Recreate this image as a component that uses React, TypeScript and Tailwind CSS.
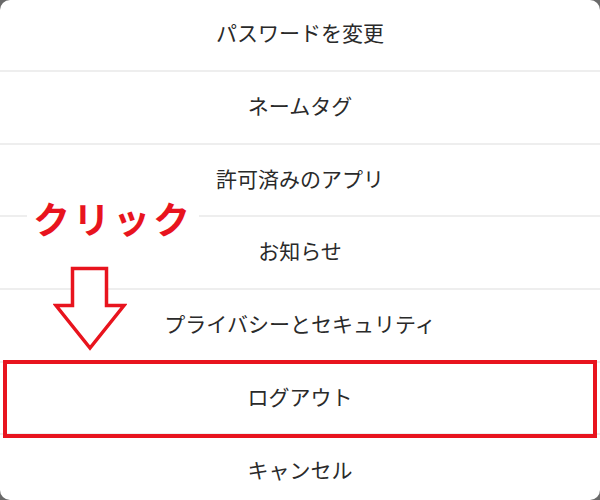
const items = [
    "パスワードを変更",
    "ネームタグ",
    "許可済みのアプリ",
    "お知らせ",
    "プライバシーとセキュリティ",
    "ログアウト",
    "キャンセル",
];

function DownArrow() {
    return (
        <svg width="74" height="86" viewBox="0 0 74 86" fill="none">
            <path
                d="M19.5 2.5 H53.5 V39.5 H71 L37 82 L3 39.5 H19.5 Z"
                stroke="#e8141e"
                strokeWidth="3.5"
                strokeLinejoin="miter"
                fill="#ffffff"
            />
        </svg>
    );
}

export default function App() {
    return (
        <div
            className="w-[600px] h-[500px] bg-[#6a6a6a] overflow-hidden"
            style={{ fontFamily: '"Noto Sans CJK JP", "Noto Sans", sans-serif' }}
        >
            <div className="relative w-full h-full bg-white rounded-[10px] overflow-hidden">
                <div className="flex flex-col -mt-[0.67px]">
                    {items.map((label, i) => (
                        <div
                            key={label}
                            className={
                                "relative h-[72.67px] flex items-center justify-center pb-[3px] text-[21px] text-[#2a2a2a] " +
                                (i < items.length - 1 ? "border-b-2 border-[#eeeeee]" : "")
                            }
                        >
                            {label}
                            {label === "ログアウト" && (
                                <span className="absolute left-[3px] right-[3px] top-[-3px] bottom-[-5px] border-[4px] border-[#e8141e]" />
                            )}
                        </div>
                    ))}
                </div>

                <div className="absolute left-[27px] top-[191px] bg-white px-[6px] h-[54px] flex items-center">
                    <span className="text-[37px] font-bold leading-none text-[#e8141e] tracking-[3px]">
                        クリック
                    </span>
                </div>

                <div className="absolute left-[53px] top-[266px]">
                    <DownArrow />
                </div>
            </div>
        </div>
    );
}
